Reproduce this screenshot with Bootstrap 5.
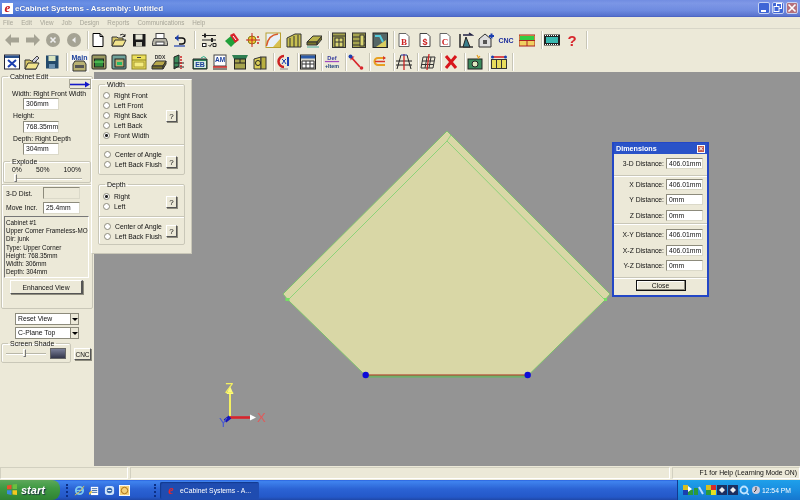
<!DOCTYPE html>
<html lang="en">
<head>
<meta charset="utf-8">
<title>eCabinet Systems</title>
<link href="https://cdn.jsdelivr.net/npm/bootstrap@5.3.0/dist/css/bootstrap.min.css" rel="stylesheet">
<style>
html,body{margin:0;height:100%;overflow:hidden;background:#ece9d8}
.app{width:800px;height:500px;font:6.8px/9px "Liberation Sans",Arial,sans-serif;color:#111;background:#ece9d8;filter:blur(.35px)}
.ttl{height:17px;padding:0 2px;background:linear-gradient(90deg,rgba(40,90,210,.25),rgba(140,130,220,.25)),linear-gradient(180deg,#6f93e4,#7da0ea 20%,#6a90e2 65%,#4a6ec8);color:#fff;font-size:8px;font-weight:700;border-bottom:1px solid #4d66c4}
.ttl-txt{margin-left:2px;text-shadow:0 0 1px #24408f}
.logo{width:11px;height:11px;background:#fff;color:#c4161c;font:italic 700 13px/10px "Liberation Serif",serif;text-align:center}
.wb{width:12px;height:12px;border:1px solid #c6d3f3;border-radius:2px;background:#3f66d6;margin-left:2px}
.wb.end{background:#b5707c}
.mnu{height:11px;color:#a8a699;font-size:6.3px;padding-left:3px;gap:8px}
.tbar{padding-left:4px}
.row1{border-top:1px solid #d8d6c8;height:23px}
.row2{height:21px}
.ib{width:20.5px;height:20px;flex:none}
.row2 .ib{width:20.2px}
.row2 .ib.nb{width:19.9px}
.ib svg{width:16px;height:16px;display:block}
.gp{margin-left:3px}
.tsep{width:2px;height:18px;margin:0 1px;border-left:1px solid #c8c6b6;border-right:1px solid #fff;flex:none}
.cnctxt{color:#1f2f9c;font-size:7px}
.mainib{width:19px;height:21px;background:#f7f6ef;flex:none;margin:0 1.5px}
.body{height:394px}
.lft{width:94px;flex:none;padding:0 1px}
.view{background:#949494}
.view svg{display:block}
fieldset.gb{border:1px solid #c9c7b8;border-radius:2px;padding:0;margin:0;box-shadow:inset 1px 1px 0 #fff}
legend.gl{float:none;width:auto;font-size:7px;line-height:9px;margin:0 0 0 6px;padding:0 2px}
.fs-edit{height:237px}
.fs-shade{width:70px;height:24px}
.t9{height:9px;line-height:9px;white-space:nowrap}
.ti{height:12px;width:36px;background:#fff;border:1px solid #8d8b7c;border-right-color:#dbd9c9;border-bottom-color:#dbd9c9;padding:0 2px;line-height:10px;white-space:nowrap;overflow:hidden}
.ti.off{background:#ece9d8}
.m-a{margin:8px 0 0 10px}
.m-b{margin:0 0 0 21px}
.m-b1{margin:1px 0 0 21px}
.m-c{margin:1px 0 0 11px}
fieldset.gb.exp{margin:2px 1px 0 1px;height:26px}
.pcts{padding:0 9px 0 8px;height:9px;margin-top:-1px}
.trk{height:2px;background:#b9b7a8;border-bottom:1px solid #fff;position:relative}
.trk i{position:absolute;width:3px;height:8px;top:-4px;background:#ece9d8;border:1px solid #777;border-top-color:#fff;border-left-color:#fff}
.trk-a{margin:4px 8px 0 10px}
.thumb-s i{left:17px}
.ln{border-top:1px solid #c9c7b8;border-bottom:1px solid #fff;height:2px;margin-top:1px}
.dst{height:14.5px;padding:0 0 0 4px}
.dsti{margin-right:12px;width:37px}
.lst{margin:1px 3px 0 2px;height:62px;padding:2px 0 0 1px;border:1px solid #777;border-right-color:#fff;border-bottom-color:#fff;line-height:8.2px;font-size:6.3px;white-space:nowrap;overflow:hidden;background:#ece9d8}
.bvl{background:#ece9d8;border:1px solid #fff;border-right-color:#555;border-bottom-color:#555;box-shadow:1px 1px 0 #8f8d7f;text-align:center;line-height:inherit;padding:0;color:#111;font:inherit}
.enh{display:block;width:73px;height:14px;margin:2px 0 0 8px;border-right-width:2px}
.sel{height:12px;width:64px;margin:0 0 2px 14px;background:#fff;border:1px solid #8d8b7c;padding-left:2px;line-height:10px}
.sel b{width:8px;height:10px;background:#ece9d8;border-left:1px solid #8d8b7c;position:relative}
.sel b::after{content:"";position:absolute;left:1px;top:4px;border:3px solid transparent;border-top-color:#000;border-bottom:0}
.cnc{width:17px;height:12px;margin:9px 0 0 3px;font-size:6.5px}
.sw{width:16px;height:11px;border:1px solid #666;background:linear-gradient(180deg,#7a7f99,#33364a)}
.flp{left:-3px;top:7px;width:101px;height:175px;background:#ece9d8;border:1px solid #fff;border-right-color:#c9c7b8;border-bottom-color:#c9c7b8;padding:0 6px}
.arr{left:-25px;top:7px;width:22px;height:9px;background:#ece9d8;border:1px solid #a9a797;border-bottom:0}
.rd{height:10.2px;padding-left:4px;gap:4px;white-space:nowrap}
.rd i{width:7px;height:7px;border-radius:50%;background:#fff;border:1px solid #8d8b7c;display:block;flex:none}
.rd i.on{background:radial-gradient(circle,#222 0 1.3px,#fff 1.6px)}
.qb{position:absolute;right:7px;width:11px;height:12px;font-size:8px}
.q1{top:21px}.q2{top:11px}.q3{top:7px}.q4{top:8px}
.sec{height:30px;border-top:1px solid #c9c7b8;box-shadow:inset 0 1px 0 #fff;padding:4px 0 0 1px;position:relative}
.sec-d{height:28px}
.blk-w{height:55px;padding-top:1px}
.blk-d{height:27px;padding-top:2px}
fieldset.gb.fs-depth{margin-top:5px}
.dlg{left:518px;top:70px;width:97px;height:155px;background:#ece9d8;border:1px solid #2347c6;border-width:1px 2px 2px}
.dt{height:11px;background:#2a53c8;color:#fff;font-weight:700;font-size:7.2px;padding:0 2px}
.dx{width:8px;height:8px;background:#c25a4d;border:1px solid #fff;color:#fff;font:700 7px/6px "Liberation Sans",sans-serif;text-align:center}
.dr{height:15.5px;padding-right:4px}
.dr span{flex:1;text-align:right;padding-right:2px;white-space:nowrap}
.dr .ti{flex:none;width:37px;height:11px}
.dbx{border-top:1px solid #c9c7b8;box-shadow:inset 0 1px 0 #fff}
.d-first{margin-top:2px}
.d-a{padding-top:1px;margin-top:3px}
.d-b{padding-top:3px}
.d-c{padding-top:2px;margin-top:3px}
.cls{display:block;width:50px;height:11px;margin:0 auto;border:1px solid #111;box-shadow:inset -1px -1px 0 #8f8d7f,inset 1px 1px 0 #fff;background:#ece9d8;padding:0;font:inherit;color:#111}
.stb{height:14px;padding-top:1px}
.pn{border:1px solid #d2d0c0;border-right-color:#fff;border-bottom-color:#fff;height:12px;line-height:10px}
.p1{width:128px;margin-right:2px}
.p3{width:128px;margin-left:2px;text-align:right;padding-right:2px;white-space:nowrap}
.tk{height:20px;background:linear-gradient(180deg,#2a63e0,#3f83ee 8%,#2b63d4 45%,#2458c8 85%,#1f48a8);color:#fff;font-size:6.8px}
.stt{width:60px;height:20px;background:linear-gradient(180deg,#5da85b,#3f9a42 40%,#2f8233);border-radius:0 8px 8px 0;font:italic 700 11px/20px "Liberation Sans",sans-serif;padding-left:21px;position:relative;text-shadow:1px 1px 1px #234}
.stt svg{position:absolute;left:6px;top:4px}
.grip{width:2px;height:13px;margin-left:6px;border-left:2px dotted #0c2f86}
.ql{margin-left:6px}
.ql svg{width:11px;height:11px;margin-right:4px;display:block}
.g2{margin-left:20px}
.tkb{width:99px;height:17px;background:#1f4cb0;border-radius:2px;padding-left:6px;gap:4px;margin-left:4px;white-space:nowrap;box-shadow:inset 1px 1px 1px #123a90}
.try{width:123px;height:20px;background:linear-gradient(180deg,#1ea0ea,#1a8ee0 50%,#1677cf);border-left:1px solid #123a90;padding-left:5px}
.try svg{width:10px;height:10px;margin-right:1.3px}
.clk{margin-left:auto;margin-right:9px;white-space:nowrap}
</style>
</head>
<body>
<div class="app d-flex flex-column">

<div class="ttl d-flex align-items-center">
  <span class="logo">e</span><span class="ttl-txt">eCabinet Systems - Assembly: Untitled</span>
  <span class="ms-auto wb"><svg width="10" height="10" viewBox="0 0 10 10"><rect x="2" y="7" width="5" height="2" fill="#fff"/></svg></span>
  <span class="wb"><svg width="10" height="10" viewBox="0 0 10 10" fill="none" stroke="#fff"><rect x="3.5" y=".5" width="5" height="5"/><rect x="1" y="3.5" width="5" height="5" fill="#3f66d6"/></svg></span>
  <span class="wb end"><svg width="10" height="10" viewBox="0 0 10 10" stroke="#fff" stroke-width="1.6"><path d="M1.5 1.5l7 7M8.5 1.5l-7 7"/></svg></span>
</div>

<div class="mnu d-flex align-items-center"><span>File</span><span>Edit</span><span>View</span><span>Job</span><span>Design</span><span>Reports</span><span>Communications</span><span>Help</span></div>

<div class="d-flex row1 tbar align-items-center">
  <span class="ib d-flex align-items-center"><svg viewBox="0 0 16 16"><path d="M1 8l6-6v3.500h8v5H7V14z" fill="#a5a394"/></svg></span>
  <span class="ib d-flex align-items-center"><svg viewBox="0 0 16 16"><path d="M15 8L9 2v3.500H1v5h8V14z" fill="#a5a394"/></svg></span>
  <span class="ib d-flex align-items-center"><svg viewBox="0 0 16 16"><circle cx="8" cy="8" r="7" fill="#a5a394"/><path d="M5.500 5.500l5 5m0-5l-5 5" stroke="#eee" stroke-width="1.600"/></svg></span>
  <span class="ib d-flex align-items-center"><svg viewBox="0 0 16 16"><circle cx="8" cy="8" r="7" fill="#a5a394"/><path d="M9.500 5L6 8l3.500 3z" fill="#eee"/></svg></span>
  <span class="tsep"></span>
  <span class="ib d-flex align-items-center"><svg viewBox="0 0 16 16"><path d="M3 1.500h7l3 3v10H3z" fill="#fff" stroke="#000"/><path d="M10 1.500v3h3" fill="none" stroke="#000"/></svg></span>
  <span class="ib d-flex align-items-center"><svg viewBox="0 0 16 16"><path d="M1 5h5l1 1h5v8H1z" fill="#d8c868" stroke="#333"/><path d="M1 14l3-6h11l-3 6z" fill="#f2e48c" stroke="#333"/><path d="M9 3q3-2 5 1M14 2v2.500h-2.500" fill="none" stroke="#222"/></svg></span>
  <span class="ib d-flex align-items-center"><svg viewBox="0 0 16 16"><rect x="2" y="2" width="12.500" height="12.500" fill="#1a1a1a"/><rect x="4.500" y="2.500" width="7" height="5" fill="#e8e8d8"/><rect x="5" y="10" width="6" height="4.500" fill="#c8c8b8"/></svg></span>
  <span class="ib d-flex align-items-center"><svg viewBox="0 0 16 16"><rect x="4" y="1.500" width="8" height="5" fill="#fff" stroke="#444"/><path d="M2 6.500h12l1.500 4v3h-15v-3z" fill="#b5b3a6" stroke="#444"/><rect x="4" y="10" width="8" height="3" fill="#fff" stroke="#444"/></svg></span>
  <span class="ib d-flex align-items-center"><svg viewBox="0 0 16 16"><path d="M3 6h7a3 3 0 0 1 0 6H7" fill="none" stroke="#111" stroke-width="1.400"/><path d="M6.500 2.500L3 6l3.500 3.500z" fill="#1b3fb0"/><path d="M2 14h11" stroke="#1b3fb0" stroke-width="1.200"/></svg></span>
  <span class="tsep"></span>
  <span class="ib d-flex align-items-center ms-1"><svg viewBox="0 0 16 16" fill="none" stroke="#222"><path d="M1 3.500h14M1 8h14"/><path d="M4 1.500v4M11 6v4" stroke-width="2"/><rect x="1.500" y="11.500" width="3.500" height="3" fill="#fff"/><path d="M7.500 13l1.500 1.500 2-3M12 11.500h3v3h-3z"/></svg></span>
  <span class="ib d-flex align-items-center gp"><svg viewBox="0 0 16 16"><path d="M1 9l7-6 5 6-6 6z" fill="#21a03a"/><path d="M6 3l4-2 5 7-4 3z" fill="#d8222a"/><path d="M9 4l3 4" stroke="#fff"/></svg></span>
  <span class="ib d-flex align-items-center"><svg viewBox="0 0 16 16"><circle cx="7" cy="8" r="4" fill="#e8cc3a" stroke="#8a7a10"/><path d="M7 1v14M1 8h14" stroke="#c22" stroke-width="1"/><path d="M13 4v2M13 10v2" stroke="#c22" stroke-width="1.500"/></svg></span>
  <span class="ib d-flex align-items-center"><svg viewBox="0 0 16 16"><rect x="1" y="1" width="14.500" height="14.500" fill="#e8f0f8" stroke="#b8a030"/><path d="M1.500 14Q3 3 13 2" fill="none" stroke="#d85a2a" stroke-width="1.500"/><path d="M8 15l7-8v8z" fill="#d8c050"/></svg></span>
  <span class="ib d-flex align-items-center"><svg viewBox="0 0 16 16"><path d="M1 15V6l8-4h6v13z" fill="#c8c050" stroke="#333"/><path d="M4 15V6M8 15V4M12 15V3" stroke="#333"/></svg></span>
  <span class="ib d-flex align-items-center"><svg viewBox="0 0 16 16"><path d="M1 10l6-6h9l-5 6z" fill="#b9b24a" stroke="#333"/><path d="M1 10h10v3H1zM11 10l5-6v3l-5 6z" fill="#77732a" stroke="#333"/><path d="M1 15h12" stroke="#4a9" stroke-width="1"/></svg></span>
  <span class="tsep"></span>
  <span class="ib d-flex align-items-center"><svg viewBox="0 0 16 16"><rect x="1.500" y="1" width="13" height="14.500" fill="#a5a34e" stroke="#333"/><path d="M1.500 4h13" stroke="#333"/><rect x="4" y="6" width="8" height="9" fill="#dcd874" stroke="#333"/><path d="M8 6v9M4 10h8" stroke="#333"/></svg></span>
  <span class="ib d-flex align-items-center"><svg viewBox="0 0 16 16"><rect x="1.500" y="1" width="13" height="14.500" fill="#a5a34e" stroke="#333"/><path d="M1.500 5h13M1.500 9h13M1.500 13h13" stroke="#333"/><rect x="9" y="3" width="4" height="11" fill="#dcd874" stroke="#333"/></svg></span>
  <span class="ib d-flex align-items-center"><svg viewBox="0 0 16 16"><rect x="1" y="1" width="14.500" height="14.500" fill="#566" stroke="#222"/><path d="M4 15l10-7v7z" fill="#d8cc60"/><path d="M3 4h5l3 6" fill="none" stroke="#5cd" stroke-width="2"/></svg></span>
  <span class="tsep"></span>
  <span class="ib d-flex align-items-center"><svg viewBox="0 0 16 16"><path d="M3 1.500h7l3 3v10H3z" fill="#fff" stroke="#666"/><text x="8" y="12.500" font-size="9" font-weight="700" font-family="Liberation Serif" fill="#c22" text-anchor="middle">B</text></svg></span>
  <span class="ib d-flex align-items-center"><svg viewBox="0 0 16 16"><path d="M3 1.500h7l3 3v10H3z" fill="#fff" stroke="#444"/><text x="8" y="12.500" font-size="9" font-weight="700" font-family="Liberation Sans" fill="#c22" text-anchor="middle">$</text></svg></span>
  <span class="ib d-flex align-items-center"><svg viewBox="0 0 16 16"><path d="M3 1.500h7l3 3v10H3z" fill="#fff" stroke="#666"/><text x="8" y="12.500" font-size="9" font-weight="700" font-family="Liberation Serif" fill="#c22" text-anchor="middle">C</text></svg></span>
  <span class="ib d-flex align-items-center"><svg viewBox="0 0 16 16"><path d="M2 2v13h13" fill="none" stroke="#333" stroke-width="1.600"/><path d="M5 15l3-10 4 10z" fill="#3a7f8c" stroke="#222"/><path d="M5 3h9l-3-2" stroke="#224" stroke-width="1.500" fill="none"/></svg></span>
  <span class="ib d-flex align-items-center"><svg viewBox="0 0 16 16"><path d="M1 7l6-5 6 5v8H1z" fill="#ddd" stroke="#333"/><rect x="5" y="8" width="4" height="4" fill="#555"/><path d="M11 4h5M13.500 1.500v5" stroke="#1b3fb0" stroke-width="2"/></svg></span>
  <span class="ib d-flex align-items-center fw-bold cnctxt">CNC</span>
  <span class="ib d-flex align-items-center"><svg viewBox="0 0 16 16"><rect x="0" y="3" width="16" height="11" fill="#f0d060" stroke="#a22"/><path d="M0 8.500h16M8 8.500V14" stroke="#a22"/><rect x="1" y="4" width="14" height="4" fill="#3c4"/></svg></span>
  <span class="tsep"></span>
  <span class="ib d-flex align-items-center"><svg viewBox="0 0 16 16"><rect x="0" y="2.500" width="16" height="11" fill="#222"/><rect x="2" y="5" width="12" height="6" fill="#39b8b0"/><path d="M1 3.500h14M1 12.500h14" stroke="#fff" stroke-dasharray="1 1"/></svg></span>
  <span class="ib d-flex align-items-center"><svg viewBox="0 0 16 16"><text x="8" y="14" font-size="15" font-weight="700" font-family="Liberation Sans" fill="#d8262c" text-anchor="middle">?</text></svg></span>
  <span class="tsep"></span>
</div>

<div class="d-flex row2 tbar align-items-center">
  <span class="ib d-flex align-items-center"><svg viewBox="0 0 16 16"><rect x=".5" y="1" width="15" height="14" fill="#fff" stroke="#223"/><rect x="1" y="1.500" width="14" height="2.500" fill="#28508c"/><path d="M4 6l8 7m0-7l-8 7" stroke="#1b3fb0" stroke-width="2"/></svg></span>
  <span class="ib d-flex align-items-center"><svg viewBox="0 0 16 16"><path d="M1 6h5l1 1h5v8H1z" fill="#d8c868" stroke="#333"/><path d="M1 15l3-6h11l-3 6z" fill="#f2e48c" stroke="#333"/><path d="M8 7l5-5 2 2-5 5z" fill="#ccd" stroke="#444"/></svg></span>
  <span class="ib d-flex align-items-center"><svg viewBox="0 0 16 16"><rect x="2" y="1.500" width="12.500" height="13" fill="#234a6c"/><rect x="4.500" y="2" width="7" height="5" fill="#d9e4c0"/><rect x="5" y="10" width="6" height="4.500" fill="#6a90b0"/></svg></span>
  <span class="tsep"></span>
  <span class="mainib d-flex align-items-center justify-content-center"><svg width="17" height="20" viewBox="0 0 17 20"><text x="8.500" y="7.500" font-size="7" font-weight="700" font-family="Liberation Sans" fill="#1b3f9c" text-anchor="middle">Main</text><path d="M2 19v-7l2-3h9l2 3v7z" fill="#b9b274" stroke="#333"/><rect x="4" y="13" width="9" height="3" fill="#555"/></svg></span>
  <span class="ib d-flex align-items-center"><svg viewBox="0 0 16 16"><rect x="1" y="1" width="14" height="14" rx="1" fill="#9a9a60" stroke="#222"/><rect x="3.500" y="5" width="9" height="8" fill="#2e8b3a" stroke="#222"/><path d="M3 8h10" stroke="#6d6"/></svg></span>
  <span class="ib d-flex align-items-center"><svg viewBox="0 0 16 16"><rect x="1" y="1" width="14" height="14" rx="1" fill="#6fa39a" stroke="#222"/><rect x="4" y="5" width="9" height="8" fill="#b9b070" stroke="#222"/><rect x="6" y="8" width="5" height="3" fill="#2b6"/></svg></span>
  <span class="ib d-flex align-items-center"><svg viewBox="0 0 16 16"><rect x="1" y="1" width="14" height="14" fill="#ece05c" stroke="#8a8020"/><path d="M1 6h14" stroke="#8a8020"/><path d="M6 3.500h4" stroke="#444"/><rect x="3" y="8" width="10" height="5" fill="#f4ec80" stroke="#a89a30"/></svg></span>
  <span class="ib d-flex align-items-center"><svg viewBox="0 0 16 16"><text x="9" y="5" font-size="5" font-weight="700" font-family="Liberation Sans" fill="#333" text-anchor="middle">DDX</text><path d="M1 12l4-5h10l-3 5z" fill="#b9a94a" stroke="#333"/><path d="M1 12h11v3H1zM12 12l3-5v3l-3 5z" fill="#77702a" stroke="#333"/></svg></span>
  <span class="ib d-flex align-items-center"><svg viewBox="0 0 16 16"><path d="M3 15V3l5-2v11z" fill="#3a8a5c" stroke="#222"/><path d="M3 9h10M3 13h10" stroke="#222"/><path d="M10 2v13" stroke="#c22" stroke-dasharray="2 1" stroke-width="1.500"/></svg></span>
  <span class="ib d-flex align-items-center"><svg viewBox="0 0 16 16"><path d="M1 5h14v10H1z" fill="#2e7f5a" stroke="#222"/><rect x="2" y="7" width="12" height="7" fill="#d9ece0"/><text x="8" y="13" font-size="7" font-weight="700" font-family="Liberation Sans" fill="#1b3f9c" text-anchor="middle">EB</text><path d="M9 4q3-3 5 0" stroke="#2a8" fill="none"/></svg></span>
  <span class="ib d-flex align-items-center"><svg viewBox="0 0 16 16"><rect x="2" y="1" width="12" height="11" fill="#fff" stroke="#444"/><text x="8" y="8" font-size="6.500" font-weight="700" font-family="Liberation Sans" fill="#1b3f9c" text-anchor="middle">AM</text><path d="M1 13h14" stroke="#c22" stroke-width="1.500"/><path d="M1 15h14" stroke="#222"/></svg></span>
  <span class="ib d-flex align-items-center"><svg viewBox="0 0 16 16"><path d="M0 1h16l-2 4H2z" fill="#2f7f52"/><rect x="2.500" y="5" width="11" height="10" fill="#a5a34e" stroke="#222"/><path d="M2.500 9h11M8 5v4" stroke="#222"/></svg></span>
  <span class="ib d-flex align-items-center"><svg viewBox="0 0 16 16"><path d="M2 15V5l7-2v12z" fill="#dcd058" stroke="#333"/><rect x="9" y="3" width="5" height="12" fill="#b9b040" stroke="#333"/><circle cx="6" cy="9" r="2.500" fill="none" stroke="#222"/></svg></span>
  <span class="tsep"></span>
  <span class="ib nb d-flex align-items-center"><svg viewBox="0 0 16 16"><path d="M8 2a5.500 5.500 0 1 0 0 11" fill="none" stroke="#c22" stroke-width="2.500"/><path d="M6 5l2 2 2-2M6 10l2-3 2 3" fill="none" stroke="#1b3fb0"/><path d="M12 3v9" stroke="#1b3fb0" stroke-width="2"/><path d="M4 15h8" stroke="#888"/></svg></span>
  <span class="tsep"></span>
  <span class="ib nb d-flex align-items-center"><svg viewBox="0 0 16 16"><rect x=".5" y="1" width="15" height="14" fill="#d8d6ca" stroke="#222"/><rect x="1" y="1.500" width="14" height="3" fill="#2a5aa8"/><path d="M2 7h12v7H2zM2 10h12M6 7v7M10 7v7" fill="#fff" stroke="#333"/></svg></span>
  <span class="tsep"></span>
  <span class="ib nb d-flex align-items-center"><svg viewBox="0 0 16 18"><text x="8" y="6.500" font-size="6.500" font-weight="700" font-family="Liberation Sans" fill="#333a9c" text-anchor="middle">Def</text><path d="M0 8.500h16" stroke="#a04ac0" stroke-width="1.400"/><text x="8" y="15.500" font-size="6" font-weight="700" font-family="Liberation Sans" fill="#1b3f7c" text-anchor="middle">+Item</text></svg></span>
  <span class="tsep"></span>
  <span class="ib nb d-flex align-items-center"><svg viewBox="0 0 16 16"><path d="M3 3l9 10" stroke="#d8262c" stroke-width="1.800"/><path d="M2.500 6.500V2.500h4z" fill="#d8262c"/><circle cx="2.500" cy="2.500" r="2" fill="#1b3fb0"/><circle cx="13.500" cy="14" r="1.800" fill="#d8262c"/></svg></span>
  <span class="tsep"></span>
  <span class="ib nb d-flex align-items-center"><svg viewBox="0 0 16 16" fill="none"><path d="M13 4H6a3.500 3.500 0 0 0 0 7h7" stroke="#e8a020" stroke-width="2"/><path d="M3 7.500h10" stroke="#d8362c" stroke-width="1.500"/><path d="M11 2l3 2-3 2z" fill="#d8362c"/></svg></span>
  <span class="tsep"></span>
  <span class="ib nb d-flex align-items-center"><svg viewBox="0 0 16 16" fill="none"><path d="M5 1L1 15M11 1l4 14M0 7h16M0 11h16" stroke="#222"/><path d="M8 0v16" stroke="#c22" stroke-width="1.300"/><path d="M5 1h6" stroke="#1b3fb0"/></svg></span>
  <span class="tsep"></span>
  <span class="ib nb d-flex align-items-center"><svg viewBox="0 0 16 16" fill="none" stroke="#333"><path d="M3 3h12l-2 11H1zM2 7h12M1.500 10.500h12M7 3L5 14M11 3L9 14"/><path d="M9 0L7 16" stroke="#c22" stroke-width="1.200"/></svg></span>
  <span class="tsep"></span>
  <span class="ib nb d-flex align-items-center"><svg viewBox="0 0 16 16"><path d="M3 2l10 12m0-12L3 14" stroke="#d8161c" stroke-width="3"/></svg></span>
  <span class="tsep"></span>
  <span class="ib nb d-flex align-items-center"><svg viewBox="0 0 16 16"><rect x="1" y="5" width="14" height="10" fill="#3a8a5c" stroke="#222"/><circle cx="8" cy="10" r="3" fill="#dfe9c0" stroke="#222"/><path d="M10 1l1.500 3M13 2l-2 2.500" stroke="#e8a020" stroke-width="1.200"/></svg></span>
  <span class="tsep"></span>
  <span class="ib nb d-flex align-items-center"><svg viewBox="0 0 16 16"><path d="M1 3h14" stroke="#d8161c" stroke-width="1.500"/><circle cx="1.500" cy="3" r="1.500" fill="#1b3fb0"/><circle cx="14.500" cy="3" r="1.500" fill="#1b3fb0"/><rect x=".5" y="5.500" width="15" height="9" fill="#e8dc5c" stroke="#333"/><path d="M5.500 5.500v9M10.500 5.500v9" stroke="#333"/></svg></span>
  <span class="tsep"></span>
</div>

<div class="body d-flex">
  <div class="lft">
    <fieldset class="gb fs-edit">
      <legend class="gl">Cabinet Edit</legend>
      <div class="t9 m-a">Width: Right Front Width</div>
      <div class="ti m-b">306mm</div>
      <div class="t9 m-c">Height:</div>
      <div class="ti m-b1">768.35mm</div>
      <div class="t9 m-c">Depth: Right Depth</div>
      <div class="ti m-b">304mm</div>
      <fieldset class="gb exp">
        <legend class="gl">Explode</legend>
        <div class="pcts d-flex justify-content-between"><span>0%</span><span>50%</span><span>100%</span></div>
        <div class="trk trk-a"><i></i></div>
      </fieldset>
      <div class="ln"></div>
      <div class="dst d-flex align-items-center"><span class="flex-fill">3-D Dist.</span><span class="ti off dsti"></span></div>
      <div class="dst d-flex align-items-center"><span class="flex-fill">Move Incr.</span><span class="ti dsti">25.4mm</span></div>
      <div class="lst">Cabinet #1<br>Upper Corner Frameless-MO<br>Dir: junk<br>Type: Upper Corner<br>Height: 768.35mm<br>Width: 306mm<br>Depth: 304mm</div>
      <button class="bvl enh" type="button">Enhanced View</button>
    </fieldset>
    <div class="sel d-flex justify-content-between mt-1"><span>Reset View</span><b></b></div>
    <div class="sel d-flex justify-content-between mb-0"><span>C-Plane Top</span><b></b></div>
    <div class="d-flex align-items-start">
      <fieldset class="gb fs-shade">
        <legend class="gl">Screen Shade</legend>
        <div class="d-flex align-items-center ps-1 gap-1">
          <div class="trk thumb-s flex-fill"><i></i></div><div class="sw me-1"></div>
        </div>
      </fieldset>
      <button class="bvl cnc" type="button">CNC</button>
    </div>
  </div>
  <div class="view flex-fill position-relative">
    <svg width="706" height="394" viewBox="94 72 706 394">
      <polygon points="447,131 610,294 605,300 528,375.500 365.500,375.500 288,300 283,294" fill="#d9d7a6" stroke="#7cc36c" stroke-width="1"/>
      <path d="M288,300 L447,141 L605,300 M447,141 L451,135" fill="none" stroke="#84d274" stroke-width=".9"/>
      <path d="M366,376.800H527" stroke="#62b85c" stroke-width="1.200"/>
      <path d="M366,375H527" stroke="#a8281c" stroke-width="1"/>
      <rect x="285.500" y="298" width="4" height="3" fill="#74e064"/><rect x="604" y="298" width="3" height="3" fill="#74e064"/>
      <circle cx="365.700" cy="375" r="3.200" fill="#0c0cd8"/><circle cx="527.700" cy="375" r="3.200" fill="#0c0cd8"/>
      <path d="M230,416V389" stroke="#f4f060" stroke-width="2"/><path d="M226.500,394L230,386L233.500,394z" fill="#fcfa80"/>
      <path d="M230,417.500H251" stroke="#d8242c" stroke-width="2.600"/><path d="M250,414.500L256,417.500L250,420.500z" fill="#fff"/>
      <path d="M230,417L225,421" stroke="#1616b8" stroke-width="4"/>
      <text x="225" y="393" font-size="14" font-family="Liberation Sans" fill="#f4f060">Z</text>
      <text x="257" y="422" font-size="13" font-family="Liberation Sans" fill="#e05a5a">X</text>
      <text x="219" y="427" font-size="13" font-family="Liberation Sans" fill="#4a5ad0">Y</text>
    </svg>
    <button class="bvl arr position-absolute" type="button" aria-label="Expand"><svg class="d-block" width="20" height="7" viewBox="0 0 20 7"><path d="M0 3.500h16" stroke="#1418c8" stroke-width="1.600"/><path d="M15 .5l5 3-5 3z" fill="#1418c8"/></svg></button>
    <div class="flp position-absolute">
      <fieldset class="gb">
        <legend class="gl">Width</legend>
        <div class="position-relative blk-w">
          <div class="rd d-flex align-items-center"><i></i>Right Front</div>
          <div class="rd d-flex align-items-center"><i></i>Left Front</div>
          <div class="rd d-flex align-items-center"><i></i>Right Back</div>
          <div class="rd d-flex align-items-center"><i></i>Left Back</div>
          <div class="rd d-flex align-items-center"><i class="on"></i>Front Width</div>
          <button class="bvl qb q1" type="button">?</button>
        </div>
        <div class="sec">
          <div class="rd d-flex align-items-center"><i></i>Center of Angle</div>
          <div class="rd d-flex align-items-center"><i></i>Left Back Flush</div>
          <button class="bvl qb q2" type="button">?</button>
        </div>
      </fieldset>
      <fieldset class="gb fs-depth">
        <legend class="gl">Depth</legend>
        <div class="position-relative blk-d">
          <div class="rd d-flex align-items-center"><i class="on"></i>Right</div>
          <div class="rd d-flex align-items-center"><i></i>Left</div>
          <button class="bvl qb q3" type="button">?</button>
        </div>
        <div class="sec sec-d">
          <div class="rd d-flex align-items-center"><i></i>Center of Angle</div>
          <div class="rd d-flex align-items-center"><i></i>Left Back Flush</div>
          <button class="bvl qb q4" type="button">?</button>
        </div>
      </fieldset>
    </div>
    <div class="dlg position-absolute">
      <div class="dt d-flex align-items-center justify-content-between"><span>Dimensions</span><span class="dx">×</span></div>
      <div class="dr d-first d-flex align-items-center"><span>3-D Distance:</span><div class="ti">406.01mm</div></div>
      <div class="dbx d-a">
        <div class="dr d-flex align-items-center"><span>X Distance:</span><div class="ti">406.01mm</div></div>
        <div class="dr d-flex align-items-center"><span>Y Distance:</span><div class="ti">0mm</div></div>
        <div class="dr d-flex align-items-center"><span>Z Distance:</span><div class="ti">0mm</div></div>
      </div>
      <div class="dbx d-b">
        <div class="dr d-flex align-items-center"><span>X-Y Distance:</span><div class="ti">406.01mm</div></div>
        <div class="dr d-flex align-items-center"><span>X-Z Distance:</span><div class="ti">406.01mm</div></div>
        <div class="dr d-flex align-items-center"><span>Y-Z Distance:</span><div class="ti">0mm</div></div>
      </div>
      <div class="dbx d-c"><button class="cls" type="button">Close</button></div>
    </div>
  </div>
</div>

<div class="stb d-flex"><div class="pn p1"></div><div class="pn flex-fill"></div><div class="pn p3">F1 for Help (Learning Mode ON)</div></div>

<div class="tk d-flex align-items-center">
  <div class="stt"><svg width="12" height="12" viewBox="0 0 12 12"><path d="M1 1.500l4.500-.8v4.600H1z" fill="#e8502c"/><path d="M6.500.5l4.500-.5v5H6.500z" fill="#6cc040"/><path d="M1 6.300h4.500V11L1 10z" fill="#3a8ae0"/><path d="M6.500 6.300H11V11l-4.500-.5z" fill="#f4c820"/></svg>start</div>
  <span class="grip"></span>
  <div class="ql d-flex align-items-center">
    <svg viewBox="0 0 12 12"><circle cx="6" cy="6" r="4" fill="none" stroke="#7cc8f0" stroke-width="2"/><path d="M2 6h8" stroke="#7cc8f0" stroke-width="1.500"/><path d="M1 11Q6 9 11 1" fill="none" stroke="#e8c840"/></svg>
    <svg viewBox="0 0 12 12"><rect x="2" y="2" width="8" height="9" fill="#fff"/><path d="M3 4h6M3 6h6M3 8h6" stroke="#36a"/><path d="M0 10l3-3" stroke="#e8c840" stroke-width="2"/></svg>
    <svg viewBox="0 0 12 12"><rect x="1" y="1" width="10" height="10" rx="3" fill="#cfe4fa"/><circle cx="6" cy="6" r="3" fill="#36a"/><path d="M4 6h4" stroke="#fff"/></svg>
    <svg viewBox="0 0 12 12"><rect x=".5" y=".5" width="11" height="11" fill="#f4d078" stroke="#fff"/><circle cx="6" cy="6" r="3.500" fill="none" stroke="#a86a10"/></svg>
  </div>
  <span class="grip g2"></span>
  <div class="tkb d-flex align-items-center"><svg width="10" height="12" viewBox="0 0 10 12"><text x="5" y="9.500" font-size="12" font-style="italic" font-weight="700" font-family="Liberation Serif" fill="#e8262c" text-anchor="middle">e</text></svg>eCabinet Systems - A...</div>
  <div class="try ms-auto d-flex align-items-center">
    <svg viewBox="0 0 10 10"><rect width="5" height="5" fill="#d8c020"/><rect x="5" y="5" width="5" height="5" fill="#2a9a3a"/><rect y="5" width="5" height="5" fill="#1b3fb0"/><path d="M5 1l4 3-4 3z" fill="#fff"/></svg>
    <svg viewBox="0 0 10 10"><rect y="3" width="4" height="7" fill="#2a9a3a"/><path d="M5 2l4 7" stroke="#bdf" stroke-width="2"/></svg>
    <svg viewBox="0 0 10 10"><rect width="5" height="5" fill="#d8c020"/><rect x="5" width="5" height="5" fill="#d82a2a"/><rect y="5" width="5" height="5" fill="#2a9a3a"/><rect x="5" y="5" width="5" height="5" fill="#e8e020"/></svg>
    <svg viewBox="0 0 10 10"><rect width="10" height="10" fill="#1c2f60"/><path d="M2 5l3-3 3 3-3 3z" fill="#eee"/></svg>
    <svg viewBox="0 0 10 10"><rect width="10" height="10" fill="#1c2f60"/><path d="M2 5l3-3 3 3-3 3z" fill="#eee"/></svg>
    <svg viewBox="0 0 10 10"><circle cx="5" cy="5" r="3.500" fill="none" stroke="#bfe4ff" stroke-width="1.800"/><path d="M7 7l3 3" stroke="#bfe4ff" stroke-width="1.500"/></svg>
    <svg viewBox="0 0 10 10"><circle cx="5" cy="5" r="4" fill="#ccd"/><path d="M5 2v3l-2 2" stroke="#333" fill="none"/></svg>
    <span class="clk">12:54 PM</span>
  </div>
</div>
</div>
</body>
</html>
